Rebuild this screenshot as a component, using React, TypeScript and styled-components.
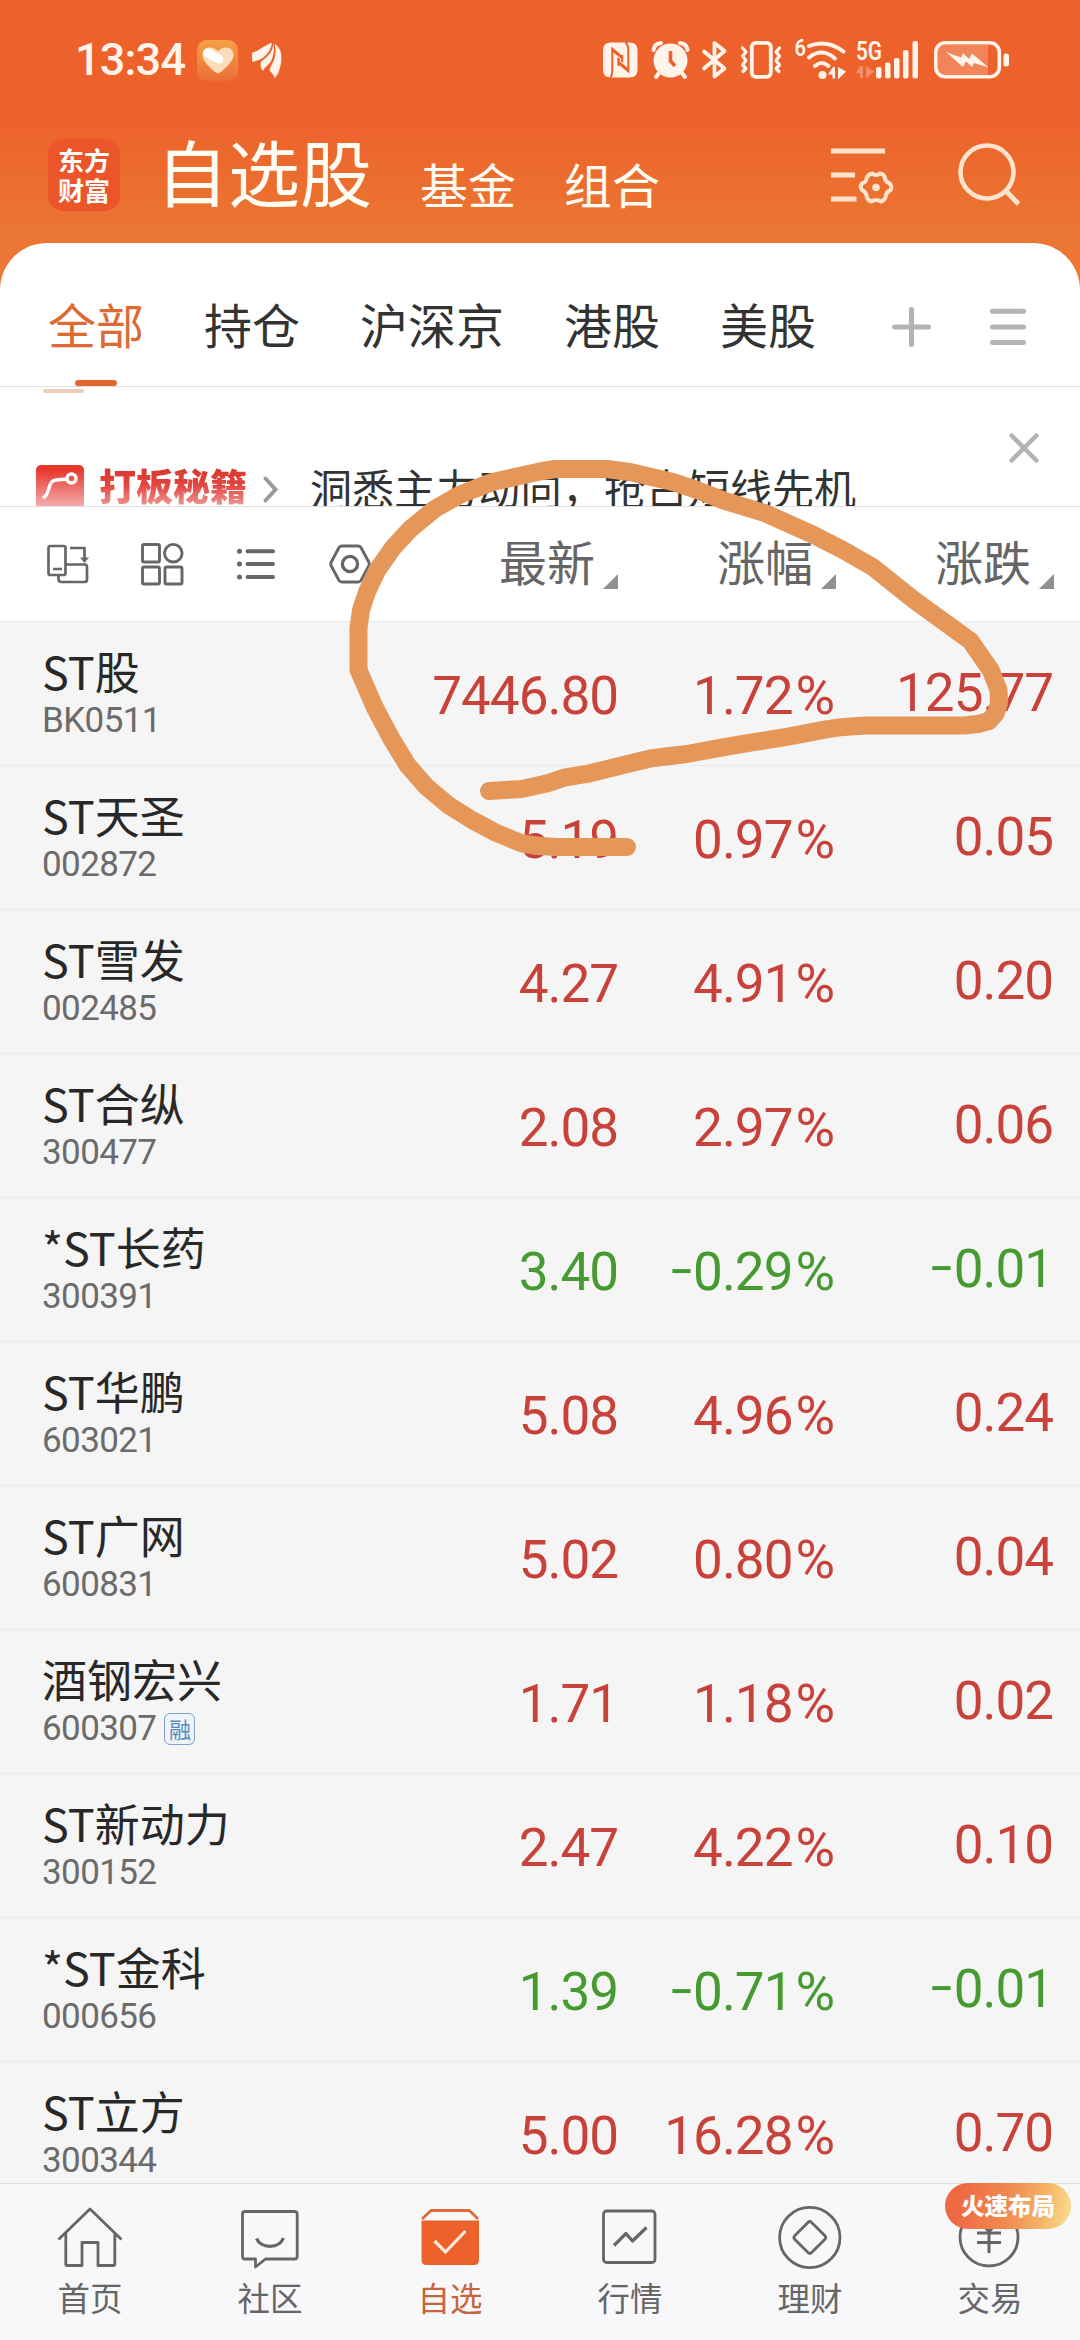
import React from 'react';
import styled, { createGlobalStyle } from 'styled-components';

const CJK = '"Noto Sans CJK SC", "Noto Sans", sans-serif';
const NUM = 'Roboto, "Liberation Sans", sans-serif';

const Global = createGlobalStyle`
  * { box-sizing: border-box; }
  html, body { margin: 0; padding: 0; }
  body { font-family: ${CJK}; background: #f5f5f5; }
  svg { display: block; overflow: visible; flex: none; }
`;

const Screen = styled.div`
  position: relative;
  width: 1080px;
  height: 2340px;
  display: flex;
  flex-direction: column;
  overflow: hidden;
  background: linear-gradient(180deg, #ed622b 0, #ed622b 118px, #eb7532 225px, #ee7735 290px);
`;

/* ---------- status bar ---------- */

const StatusBar = styled.div`
  height: 120px;
  padding: 0 71px 0 75px;
  display: flex;
  align-items: center;
  justify-content: space-between;
`;

const StatusGroup = styled.div<{ $gap: number }>`
  display: flex;
  align-items: center;
  gap: ${(p) => p.$gap}px;
`;

const Clock = styled.span`
  width: 108px;
  font: 500 45px/60px ${NUM};
  letter-spacing: -0.8px;
  color: #fff3ea;
  white-space: nowrap;
`;

const HeartTile = styled.div`
  width: 41px;
  height: 41px;
  margin: 1px 0 0 0;
  border-radius: 10px;
  display: flex;
  align-items: center;
  justify-content: center;
  background: linear-gradient(180deg, #f5a047, #ea6e34);
`;

/* ---------- title row ---------- */

const TitleRow = styled.header`
  height: 123px;
  padding: 0 60px 0 48px;
  display: flex;
  align-items: flex-start;
`;

const Logo = styled.div`
  width: 72px;
  height: 72px;
  margin-top: 19px;
  border-radius: 15px;
  background: #eb5529;
  display: flex;
  flex-direction: column;
  align-items: center;
  justify-content: center;
`;

const LogoLine = styled.span`
  font: 700 26px/30px ${CJK};
  height: 30px;
  color: #fff;
`;

const Titles = styled.nav`
  margin: 0 0 0 36px;
  display: flex;
  align-items: baseline;
  gap: 48px;
  flex: 1;
`;

const MainTitle = styled.span`
  font-size: 72px;
  line-height: 100px;
  color: #fffdf3;
`;

const SubTitle = styled.span`
  font-size: 48px;
  line-height: 70px;
  color: #fffdf3;
  transform: translateY(2.5px);
`;

const TitleIcons = styled.div`
  display: flex;
  gap: 65px;
  margin-top: 22px;
`;

/* ---------- white panel ---------- */

const Panel = styled.section`
  background: #fff;
  border-radius: 47px 47px 0 0;
`;

const Tabs = styled.div`
  height: 144px;
  padding: 0 54px 0 48px;
  display: flex;
  align-items: stretch;
  gap: 60px;
  border-bottom: 1px solid #dfdfdf;
`;

const Tab = styled.div<{ $active?: boolean }>`
  display: flex;
  flex-direction: column;
  align-items: center;
  justify-content: space-between;
  padding-top: 45px;
  font-size: 48px;
  line-height: 70px;
  color: ${(p) => (p.$active ? '#dd6a35' : '#333')};
  &::after {
    content: '';
    width: 42px;
    height: 6px;
    border-radius: 3px;
    background: ${(p) => (p.$active ? '#e2662f' : 'transparent')};
  }
`;

const TabActions = styled.div`
  flex: 1;
  display: flex;
  justify-content: flex-end;
  align-items: center;
  gap: 59px;
  padding-top: 24px;
  height: 143px;
`;

const Banner = styled.div`
  height: 120px;
  display: flex;
  align-items: flex-start;
  overflow: hidden;
  padding: 0 41px 0 36px;
  border-bottom: 1px solid #dfdfdf;
`;

const OldIndicator = styled.i`
  width: 41px;
  height: 4px;
  margin: 2px -48px 0 7px;
  border-radius: 2px;
  background: #f0cbb9;
`;

const PromoTile = styled.div`
  width: 48px;
  height: 48px;
  margin-top: 78px;
  border-radius: 5px;
  background: linear-gradient(180deg, #e8382e 10%, #f3aaa9 84%);
`;

const PromoName = styled.span`
  margin: 72px 0 0 15px;
  font-size: 37px;
  font-weight: 900;
  line-height: 52px;
  background: linear-gradient(180deg, #d93a31 22%, #e4453f 50%, #ef9a98 92%);
  -webkit-background-clip: text;
  background-clip: text;
  color: transparent;
`;

const PromoChevron = styled.div`
  margin: 89px 0 0 16px;
`;

const PromoText = styled.span`
  flex: 1;
  margin: 72px 0 0 32px;
  font-size: 42px;
  line-height: 56px;
  color: #333;
  white-space: nowrap;
`;

const Close = styled.div`
  margin-top: 46px;
`;

const Columns = styled.div`
  height: 115px;
  padding: 0 26px 0 46px;
  display: grid;
  grid-template-columns: 1fr 218px 218px 218px;
  align-items: center;
  border-bottom: 1px solid #ebebeb;
`;

const ViewTools = styled.div`
  display: flex;
  gap: 54px;
  align-items: center;
`;

const ColumnHead = styled.div`
  display: flex;
  justify-content: flex-end;
  align-items: flex-end;
  gap: 8px;
  font-size: 48px;
  line-height: 70px;
  color: #666;
`;

const HeadLabel = styled.span`
  padding-bottom: 9px;
`;

const SortMark = styled.i`
  width: 15px;
  height: 15px;
  margin-bottom: 14.5px;
  background: #8f8f94;
  clip-path: polygon(100% 0, 100% 100%, 0 100%);
`;

/* ---------- stock list ---------- */

const List = styled.main`
  flex: 1;
  min-height: 0;
  overflow: hidden;
  background: #f5f5f5;
`;

const Row = styled.div`
  height: 144px;
  padding: 0 26px 0 42px;
  display: grid;
  grid-template-columns: 1fr 218px 218px 218px;
  align-items: center;
  border-bottom: 1px solid #ebebeb;
`;

const Stock = styled.div`
  align-self: start;
  padding-top: 24px;
  white-space: nowrap;
`;

const StockName = styled.div`
  font-size: 45px;
  line-height: 50px;
  color: #282828;
`;

const StockCode = styled.div`
  margin-top: 5px;
  display: flex;
  align-items: center;
  gap: 8px;
  font: 400 35px/40px ${NUM};
  letter-spacing: -0.6px;
  color: #6b6b6b;
`;

const MarginTag = styled.span`
  width: 31px;
  height: 32px;
  border: 1.5px solid #7fa3cc;
  border-radius: 6px;
  background: #eef4fa;
  color: #5c8ac0;
  font: 400 22px/28px ${CJK};
  letter-spacing: 0;
  text-align: center;
`;

const Value = styled.div<{ $down: boolean; $raised?: boolean }>`
  text-align: right;
  font: 400 53px/60px ${NUM};
  letter-spacing: -1px;
  padding: ${(p) => (p.$raised ? '0 1px 2px 0' : '5px 0 0 0')};
  color: ${(p) => (p.$down ? '#459b2f' : '#c9423a')};
`;

const Percent = styled.span`
  margin: 0 2px 0 3px;
  font-size: 54px;
`;

const Minus = styled.span`
  display: inline-block;
  transform: scaleX(0.84);
  transform-origin: right;
`;

/* ---------- bottom navigation ---------- */

const NavBar = styled.footer`
  height: 157px;
  display: grid;
  grid-template-columns: repeat(6, 1fr);
  border-top: 1px solid #dfdfdf;
  background: #f8f8fa;
`;

const NavItem = styled.div<{ $active?: boolean }>`
  position: relative;
  display: flex;
  flex-direction: column;
  align-items: center;
  padding-top: 20px;
  font-size: 32.5px;
  line-height: 44px;
  color: ${(p) => (p.$active ? '#c8643a' : '#666')};
  svg { margin-bottom: 5px; }
`;

const NavBadge = styled.span`
  position: absolute;
  top: -1px;
  left: 45px;
  width: 126px;
  height: 46px;
  border-radius: 23px;
  background: linear-gradient(100deg, #ee6843 10%, #f08a4f 50%, #f4b064 75%, #f8dc8e 98%);
  color: #fff;
  font-size: 23.5px;
  font-weight: 900;
  line-height: 45px;
  text-align: center;
`;

const Scribble = styled.svg`
  position: absolute;
  top: 0;
  left: 0;
  pointer-events: none;
`;

/* ---------- icons ---------- */

const W = '#fff3ea';

const Heart = () => (
  <svg width="32" height="27" viewBox="0 0 32 27">
    <path d="M16 26.500C13 26 1 15 0.500 9C0 3 4 0.500 8 0.500C12 0.500 14.500 2.500 16 4.500C17.500 2.500 20 0.500 24 0.500C28.500 0.500 32 3.500 31.500 9C31 15 19 26 16 26.500Z" fill="#fbdcbb" />
    <path d="M5.500 6L17 12" stroke="#fff" strokeWidth="9" strokeLinecap="round" />
  </svg>
);

const Wing = () => (
  <svg width="30" height="35" viewBox="0 0 30 35" fill={W}>
    <path d="M20 0C15 1 12 4 8 6C5 8 3 9 0.500 9.500C-0.500 12 0 15 0.500 19C4 18 8 17 12 14C16 10.500 19 6 20 0Z" />
    <path d="M21.200 0.500C21 8 17 12 13 15.500C10 18 8 19 8.500 21C8.500 24 9.500 26 11 28C12 24.500 17 22 19 18C22 12 22.500 7 21.200 0.500Z" />
    <path d="M22.500 0.500C25 3 28 5 29 10C30 16 29 22 27 28C26 31 24 34 22.500 35C22 31 19 30 17.500 27C18 24 20.500 21 22 17C24 11 24 6 22.500 0.500Z" />
  </svg>
);

const Nfc = () => (
  <svg width="36" height="36" viewBox="0 0 36 36">
    <path d="M8 0.500H26.500Q34.500 0.500 34.500 8.500V27.500Q34.500 35.500 26.500 35.500H8Q0 35.500 0 27.500V8.500Q0 0.500 8 0.500Z" fill={W} />
    <path d="M9.300 8V28Q9.300 33 7.500 36M25.300 28V8Q25.300 3 22.500 0" stroke="#ed622b" strokeWidth="2" fill="none" />
    <path d="M8.300 4.500L20 14.500V21L18 19V16.500L8.300 9ZM26.300 31.500L14.600 21.500V15L16.600 17V19.500L26.300 27Z" fill="#ed622b" />
    <path d="M19.200 13V20M15.500 16V24" stroke="#ed622b" strokeWidth="2" />
  </svg>
);

const Alarm = () => (
  <svg width="37" height="38" viewBox="0 0 37 38" fill="none" stroke={W}>
    <circle cx="18.500" cy="19.500" r="17" fill={W} stroke="none" />
    <path d="M1.500 9Q2 3 9 2M35.500 9Q35 3 28 2" strokeWidth="4" strokeLinecap="round" />
    <path d="M7 32L4 36M30 32L33 36" strokeWidth="4" strokeLinecap="round" />
    <path d="M18.500 10V20L23 25" stroke="#ed622b" strokeWidth="3.600" />
  </svg>
);

const Bluetooth = () => (
  <svg width="25" height="38" viewBox="0 0 25 38" fill="none" stroke={W} strokeWidth="3.800" strokeLinecap="round" strokeLinejoin="round">
    <path d="M2 10.500L22.500 27.500L12.500 35.500V2L22.500 10L2 27.500" />
  </svg>
);

const Vibrate = () => (
  <svg width="42" height="38" viewBox="0 0 42 38" fill="none" stroke={W} strokeWidth="3.200" strokeLinejoin="round" strokeLinecap="round">
    <rect x="11.800" y="1.800" width="19" height="34" rx="4" strokeWidth="3.800" />
    <path d="M2.500 7L6 11L2.500 15L6 19.500L2.500 24L6 27.500L3 30.500" />
    <path d="M39.500 7L36 11L39.500 15L36 19.500L39.500 24L36 27.500L39 30.500" />
  </svg>
);

const Wifi = () => (
  <svg width="48" height="38" viewBox="0 0 48 38" fill="none" stroke={W} strokeWidth="4" strokeLinecap="round">
    <text x="-0.500" y="15" fontFamily="Roboto" fontSize="23" fontWeight="600" fill={W} stroke="none" textLength="11.500" lengthAdjust="spacingAndGlyphs">6</text>
    <path d="M14 5Q32 -2 48.500 10.500" />
    <path d="M14 16.500Q27 6 40 17.500" />
    <path d="M20 25Q27 19 33.500 25" />
    <circle cx="27.500" cy="34" r="4" fill={W} stroke="none" />
    <path d="M37.500 26.500V37.500H40V26ZM38 26L33 33.500H38ZM43 26V38.500L51 30.500Z" fill={W} stroke="none" />
  </svg>
);

const Signal = () => (
  <svg width="65" height="38" viewBox="0 0 65 38" fill={W}>
    <text x="0" y="18.500" fontFamily="Roboto" fontSize="25" fontWeight="600" textLength="26" lengthAdjust="spacingAndGlyphs">5G</text>
    <path d="M4 25L0 32H4V37H7V25ZM10 25V37.500L18 30.500Z" opacity="0.3" />
    <rect x="20" y="26" width="5.500" height="11.500" rx="2" />
    <rect x="29" y="21.500" width="5.500" height="16" rx="2" />
    <rect x="38" y="17" width="5.500" height="20.500" rx="2" />
    <rect x="47" y="9" width="5.500" height="28.500" rx="2" />
    <rect x="56.500" y="0" width="5.500" height="37.500" rx="2" />
  </svg>
);

const Battery = () => (
  <svg width="75" height="38" viewBox="0 0 75 38">
    <path d="M10 4H54V34H10Q4 34 4 28V10Q4 4 10 4Z" fill="#fff" opacity="0.22" />
    <rect x="1.800" y="1.800" width="63.500" height="34" rx="9.500" fill="none" stroke={W} strokeWidth="3.600" />
    <rect x="69.500" y="12.500" width="5.500" height="13" rx="2.500" fill={W} />
    <path d="M12 11L27 16.500L29 12L35 18L38 12.500L54.500 26.500L40 22L38 26L32 20.500L29 26Z" fill={W} />
  </svg>
);

const ListGear = () => (
  <svg width="62" height="62" viewBox="0 0 62 62" fill="none" stroke="#ffe3cd" strokeWidth="5">
    <path d="M0 9H54M0 33H24M0 57H25.500" />
    <path
      d="M41.500 31.500Q45 35 48.500 31.500Q53.500 31.500 54 37Q55 40 59 41.500Q61.500 45.500 59.500 48Q55.500 50 55 53Q54.500 58 50 59.500Q45 56.500 40.500 59.500Q36.500 58.500 35.500 53.500Q35 50 31 48Q28.500 45 31 41.500Q35 40 35.500 37Q36.500 32 41.500 31.500Z"
      strokeWidth="4"
      strokeLinejoin="round"
    />
    <circle cx="45" cy="45.500" r="3.800" fill="#ffe3cd" stroke="none" />
  </svg>
);

const Search = () => (
  <svg width="62" height="62" viewBox="0 0 62 62" fill="none" stroke="#ffe3cd" strokeWidth="4.600">
    <circle cx="29" cy="30" r="26.500" />
    <path d="M47 48L60.500 62" strokeWidth="5" />
  </svg>
);

const Plus = () => (
  <svg width="39" height="40" viewBox="0 0 39 40" stroke="#b3b3b3" strokeWidth="5" strokeLinecap="round">
    <path d="M2.500 20H36.500M19.500 2.500V37.500" />
  </svg>
);

const Menu = () => (
  <svg width="36" height="40" viewBox="0 0 36 40" stroke="#b3b3b3" strokeWidth="5" strokeLinecap="round">
    <path d="M2.500 4.200H33.500M2.500 20H33.500M2.500 35.500H33.500" />
  </svg>
);

const PromoIcon = () => (
  <svg width="48" height="48" viewBox="0 0 48 48" fill="none" stroke="#fff" strokeWidth="3.400" strokeLinecap="round">
    <path d="M8 32C14 30 11 16 20 15C24 14 27 15 31 14" />
    <circle cx="35.500" cy="13.500" r="4.500" />
  </svg>
);

const Rotate = () => (
  <svg width="41" height="42" viewBox="0 0 41 42" fill="none" stroke="#666" strokeWidth="2.700" strokeLinejoin="round">
    <rect x="2.500" y="3" width="17" height="29" rx="2" />
    <path d="M7 26H16M12.500 32V36Q12.500 39 15.500 39H38.500Q41 39 41 36.500V24Q41 21.500 38.500 21.500H20M24 5H38.500V15" />
    <path d="M34 14.500H43L38.500 20Z" fill="#666" stroke="none" />
  </svg>
);

const Grid = () => (
  <svg width="42" height="42" viewBox="0 0 42 42" fill="none" stroke="#666" strokeWidth="2.900">
    <rect x="1.500" y="1.500" width="17" height="17.500" rx="1.500" />
    <circle cx="32.300" cy="10.200" r="8.800" />
    <rect x="1.500" y="24" width="17" height="17" rx="1.500" />
    <rect x="24" y="24" width="17" height="17" rx="1.500" />
  </svg>
);

const Bullets = () => (
  <svg width="38" height="42" viewBox="0 0 38 42" fill="#666" stroke="#666" strokeWidth="4" strokeLinecap="round">
    <path d="M10.500 8.200H36M10.500 21H36M10.500 34H36" />
    <g stroke="none">
      <circle cx="2.500" cy="8.200" r="2.500" />
      <circle cx="2.500" cy="21" r="2.500" />
      <circle cx="2.500" cy="34" r="2.500" />
    </g>
  </svg>
);

const Hexagon = () => (
  <svg width="42" height="42" viewBox="0 0 42 42" fill="none" stroke="#666" strokeWidth="2.900" strokeLinejoin="round">
    <path d="M13 3H29Q31 3 32 4.500L40 19.500Q40.500 21 40 22.500L32 37.500Q31 39 29 39H13Q11 39 10 37.500L2 22.500Q1.500 21 2 19.500L10 4.500Q11 3 13 3Z" />
    <circle cx="21" cy="21" r="7.600" strokeWidth="3.300" />
  </svg>
);

const NavSvg = ({ children }: { children: React.ReactNode }) => (
  <svg width="66" height="66" viewBox="0 0 66 66" fill="none" stroke="#666" strokeWidth="2.800" strokeLinejoin="round">
    {children}
  </svg>
);

const icons: Record<string, React.ReactNode> = {
  home: (
    <NavSvg>
      <path d="M1.500 35.500L33 5L64.500 35.500M8.800 29V60Q8.800 61.500 10 61.500H25V38.500H41V61.500H56.500Q57.800 61.500 57.800 60V29" />
    </NavSvg>
  ),
  chat: (
    <NavSvg>
      <path d="M8 7.500H57.500Q60.200 7.500 60.200 10V52.500Q60.200 55 57.500 55H28.500L18.500 63V55H8Q5.500 55 5.500 52.500V10Q5.500 7.500 8 7.500Z" />
      <path d="M19.500 34.500C24 45 42 45 46.500 34" strokeWidth="3.200" />
    </NavSvg>
  ),
  box: (
    <NavSvg>
      <path d="M5 15L14 6.500H52.500L61 15" stroke="#dc6a3c" />
      <path d="M4.500 16.500H62V56Q62 61 57 61H9.500Q4.500 61 4.500 56Z" fill="#ed622b" stroke="none" />
      <path d="M17.500 37L28.500 48L48.500 27" stroke="#ffe9da" strokeWidth="3.200" strokeLinejoin="miter" />
    </NavSvg>
  ),
  chart: (
    <NavSvg>
      <rect x="6.500" y="7" width="51.500" height="51.500" rx="3" />
      <path d="M17 41.500L29 29.500L35.500 37L49.500 23.500" strokeWidth="3.200" />
    </NavSvg>
  ),
  wealth: (
    <NavSvg>
      <circle cx="32.800" cy="33.500" r="30.200" />
      <path d="M31 18.500Q32.800 16.500 34.600 18.500L47.700 31.500Q49.700 33.500 47.700 35.500L34.600 48.500Q32.800 50.500 31 48.500L17.900 35.500Q15.900 33.500 17.900 31.500Z" />
    </NavSvg>
  ),
  trade: (
    <NavSvg>
      <circle cx="32" cy="33" r="29" />
      <path d="M22 17L32 27.500L42 17M20 29H44M20 38.500H44M32 27V49" strokeWidth="3" />
    </NavSvg>
  ),
};

/* ---------- data ---------- */

type StockRow = { name: string; code: string; price: string; pct: string; diff: string; margin?: boolean };

const stocks: StockRow[] = [
  { name: 'ST股', code: 'BK0511', price: '7446.80', pct: '1.72', diff: '125.77' },
  { name: 'ST天圣', code: '002872', price: '5.19', pct: '0.97', diff: '0.05' },
  { name: 'ST雪发', code: '002485', price: '4.27', pct: '4.91', diff: '0.20' },
  { name: 'ST合纵', code: '300477', price: '2.08', pct: '2.97', diff: '0.06' },
  { name: '*ST长药', code: '300391', price: '3.40', pct: '−0.29', diff: '−0.01' },
  { name: 'ST华鹏', code: '603021', price: '5.08', pct: '4.96', diff: '0.24' },
  { name: 'ST广网', code: '600831', price: '5.02', pct: '0.80', diff: '0.04' },
  { name: '酒钢宏兴', code: '600307', price: '1.71', pct: '1.18', diff: '0.02', margin: true },
  { name: 'ST新动力', code: '300152', price: '2.47', pct: '4.22', diff: '0.10' },
  { name: '*ST金科', code: '000656', price: '1.39', pct: '−0.71', diff: '−0.01' },
  { name: 'ST立方', code: '300344', price: '5.00', pct: '16.28', diff: '0.70' },
];

const navItems = [
  { label: '首页', icon: 'home' },
  { label: '社区', icon: 'chat' },
  { label: '自选', icon: 'box', active: true },
  { label: '行情', icon: 'chart' },
  { label: '理财', icon: 'wealth' },
  { label: '交易', icon: 'trade', badge: '火速布局' },
];

const Signed = ({ value }: { value: string }) =>
  value.startsWith('−') ? (
    <>
      <Minus>−</Minus>
      {value.slice(1)}
    </>
  ) : (
    <>{value}</>
  );

const stroke =
  'M627 847L557 847L540 846L522 843.500L496 832.700L472 820L448.700 805.300L426.300 786.700L407.400 765L391 738L374.600 707L358.500 670V628L361 610L367 592L377 570.700L393 547.700L410 529.300L434.600 509L460 494.700L492.400 482L540 471.500L555 469H607L630 472L673 482L697 490L724 500.700L766 513.500L812 534.300L843 550L873 567.300L914 600L970.500 641L991 670.700L998.500 690L999 703L996 713L989 721L978 724L964 725.500H866L840 727.300L826 729.300L788 736.700L750.600 742.700L727 746.700L687 754L651.500 758.300L632.600 762.700L590 773.300L564 777.700L547.600 783.300L521.700 789L489 791';

export default function App() {
  return (
    <>
      <Global />
      <Screen>
        <StatusBar>
          <StatusGroup $gap={14}>
            <Clock>13:34</Clock>
            <HeartTile><Heart /></HeartTile>
            <Wing />
          </StatusGroup>
          <StatusGroup $gap={13}>
            <Nfc />
            <Alarm />
            <Bluetooth />
            <Vibrate />
            <Wifi />
            <Signal />
            <Battery />
          </StatusGroup>
        </StatusBar>

        <TitleRow>
          <Logo>
            <LogoLine>东方</LogoLine>
            <LogoLine>财富</LogoLine>
          </Logo>
          <Titles>
            <MainTitle>自选股</MainTitle>
            <SubTitle>基金</SubTitle>
            <SubTitle>组合</SubTitle>
          </Titles>
          <TitleIcons>
            <ListGear />
            <Search />
          </TitleIcons>
        </TitleRow>

        <Panel>
          <Tabs>
            <Tab $active>全部</Tab>
            <Tab>持仓</Tab>
            <Tab>沪深京</Tab>
            <Tab>港股</Tab>
            <Tab>美股</Tab>
            <TabActions>
              <Plus />
              <Menu />
            </TabActions>
          </Tabs>
          <Banner>
            <OldIndicator />
            <PromoTile><PromoIcon /></PromoTile>
            <PromoName>打板秘籍</PromoName>
            <PromoChevron>
              <svg width="15" height="27" viewBox="0 0 15 27" fill="none" stroke="#9a9a9a" strokeWidth="4" strokeLinecap="round">
                <path d="M2.500 2.500L12.500 13.500L2.500 24.500" />
              </svg>
            </PromoChevron>
            <PromoText>洞悉主力动向，抢占短线先机</PromoText>
            <Close>
              <svg width="30" height="30" viewBox="0 0 30 30" stroke="#b3b3b3" strokeWidth="4.500" strokeLinecap="round">
                <path d="M2.500 2.500L27.500 27.500M27.500 2.500L2.500 27.500" />
              </svg>
            </Close>
          </Banner>
          <Columns>
            <ViewTools>
              <Rotate />
              <Grid />
              <Bullets />
              <Hexagon />
            </ViewTools>
            {['最新', '涨幅', '涨跌'].map((label) => (
              <ColumnHead key={label}>
                <HeadLabel>{label}</HeadLabel>
                <SortMark />
              </ColumnHead>
            ))}
          </Columns>
        </Panel>

        <List>
          {stocks.map((s) => {
            const down = s.pct.startsWith('−');
            return (
              <Row key={s.code}>
                <Stock>
                  <StockName>{s.name}</StockName>
                  <StockCode>
                    {s.code}
                    {s.margin && <MarginTag>融</MarginTag>}
                  </StockCode>
                </Stock>
                <Value $down={down}>{s.price}</Value>
                <Value $down={down}>
                  <Signed value={s.pct} />
                  <Percent>%</Percent>
                </Value>
                <Value $down={down} $raised>
                  <Signed value={s.diff} />
                </Value>
              </Row>
            );
          })}
        </List>

        <NavBar>
          {navItems.map((n) => (
            <NavItem key={n.label} $active={n.active}>
              {icons[n.icon]}
              {n.label}
              {n.badge && <NavBadge>{n.badge}</NavBadge>}
            </NavItem>
          ))}
        </NavBar>

        <Scribble width="1080" height="2340" viewBox="0 0 1080 2340" fill="none">
          <path d={stroke} stroke="#e59759" strokeWidth="18" strokeLinecap="round" strokeLinejoin="round" />
        </Scribble>
      </Screen>
    </>
  );
}
